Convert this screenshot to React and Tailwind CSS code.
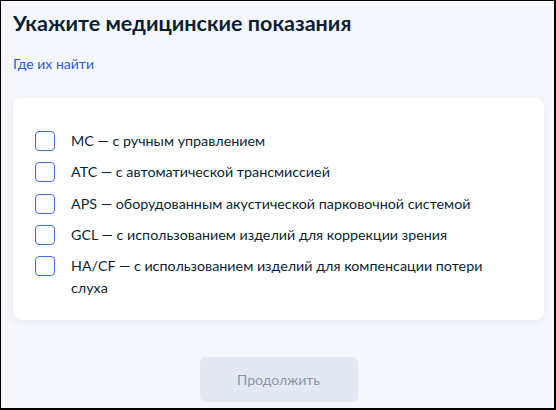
import { useState } from 'react';

const options = [
  { code: 'MC', text: 'с ручным управлением' },
  { code: 'ATC', text: 'с автоматической трансмиссией' },
  { code: 'APS', text: 'оборудованным акустической парковочной системой' },
  { code: 'GCL', text: 'с использованием изделий для коррекции зрения' },
  { code: 'HA/CF', text: 'с использованием изделий для компенсации потери слуха' },
];

function Checkbox({ checked, onChange }) {
  return (
    <button
      type="button"
      onClick={onChange}
      className={`mt-[1px] w-5 h-5 shrink-0 rounded-[4px] border-[1.5px] border-[#3f6fe0] ${checked ? 'bg-[#0d4cd3]' : 'bg-white'}`}
    />
  );
}

export default function App() {
  const [selected, setSelected] = useState([]);

  const toggle = (code) => {
    setSelected((prev) => (prev.includes(code) ? prev.filter((c) => c !== code) : [...prev, code]));
  };

  return (
    <div
      className="w-[556px] h-[410px] overflow-hidden bg-[#f5f7fc] border-t border-l border-r-2 border-b-2 border-black pl-3 pr-[10px] pt-2 flex flex-col"
      style={{ fontFamily: 'Lato, "Noto Sans", sans-serif' }}
    >
      <h1 className="text-[21.5px] leading-[29px] font-bold text-[#0b1f33]">
        Укажите медицинские показания
      </h1>

      <a href="#" className="mt-4 text-[14px] leading-5 text-[#2d5ad8] self-start">
        Где их найти
      </a>

      <div className="mt-6 bg-white rounded-lg shadow-[0_2px_8px_rgba(11,31,51,0.06)] pt-8 pb-[21px] pl-[22px] pr-8 flex flex-col gap-[9.25px]">
        {options.map((o) => (
          <label key={o.code} className="flex items-start gap-4 cursor-pointer">
            <Checkbox checked={selected.includes(o.code)} onChange={() => toggle(o.code)} />
            <span className="text-[14.3px] leading-[22px] text-[#0b1f33]">
              {`${o.code} — ${o.text}`}
            </span>
          </label>
        ))}
      </div>

      <div className="mt-[37px] flex justify-center">
        <button
          type="button"
          disabled={selected.length === 0}
          className="w-[158px] h-[45px] rounded-md bg-[#e4e8f2] text-[14px] text-[#8a96a8]"
        >
          Продолжить
        </button>
      </div>
    </div>
  );
}
